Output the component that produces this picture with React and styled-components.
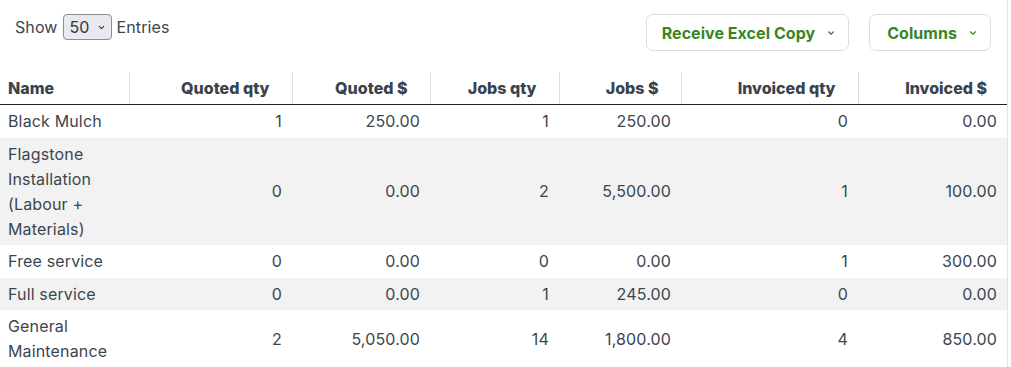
import React from 'react'
import styled, { createGlobalStyle } from 'styled-components'

const GlobalStyle = createGlobalStyle`
  body {
    margin: 0;
    background: #fff;
    font-family: Inter, "Noto Sans", sans-serif;
    color: #3c4550;
  }
`

const Page = styled.div`
  width: 1008px;
  border-right: 1px solid #e3e3e3;
  min-height: 367px;
  box-sizing: border-box;
`

const Toolbar = styled.div`
  display: flex;
  justify-content: space-between;
  align-items: flex-start;
  padding: 14px 16px 0 15px;
  height: 58px;
`

const LengthControl = styled.label`
  display: flex;
  align-items: center;
  gap: 5px;
  font-size: 16px;
  letter-spacing: 0.1px;
  line-height: 26px;
`

const FakeSelect = styled.div`
  display: flex;
  align-items: center;
  gap: 7px;
  height: 26px;
  box-sizing: border-box;
  padding: 0 5px 0 6px;
  background: #e9e9ef;
  border: 1px solid #8d8d9b;
  border-radius: 4px;
  font-size: 16px;
  color: #2f3640;
`

const Actions = styled.div`
  display: flex;
  gap: 20px;
`

const ActionButton = styled.button`
  display: flex;
  align-items: center;
  gap: 11px;
  height: 37px;
  box-sizing: border-box;
  padding: 0 12px 0 ${p => p.$padLeft || 15}px;
  background: #fff;
  border: 1px solid #dcdcdc;
  border-radius: 7px;
  font-family: Inter, "Noto Sans", sans-serif;
  font-size: 16px;
  font-weight: 700;
  letter-spacing: 0.05px;
  color: #38861f;
  cursor: pointer;
`

const Table = styled.table`
  width: 1007px;
  border-collapse: collapse;
  table-layout: fixed;
  font-size: 16px;
`

const HeadCell = styled.th`
  height: 32px;
  padding: 0 ${p => (p.$left ? 10 : 22)}px 0 8px;
  font-weight: 800;
  color: #3a434c;
  text-align: ${p => (p.$left ? 'left' : 'right')};
  border-left: ${p => (p.$left ? 'none' : '1px solid #dedede')};
  border-bottom: 1.5px solid #1e2227;

  &:last-child {
    padding-right: 20px;
  }
`

const Row = styled.tr`
  background: ${p => (p.$striped ? '#f2f2f2' : '#fff')};
`

const Cell = styled.td`
  padding: 4px 10px 3.5px 8px;
  line-height: 25px;
  letter-spacing: 0.15px;
  vertical-align: middle;
  text-align: ${p => (p.$left ? 'left' : 'right')};
  color: #3c4550;
`

const Chevron = ({ size = 10 }) => (
  <svg width={size} height={size} viewBox="0 0 10 10" fill="none">
    <path d="M2.5 3.8 L5 6.2 L7.5 3.8" stroke="currentColor" strokeWidth="1.2" strokeLinecap="round" strokeLinejoin="round" />
  </svg>
)

const columns = [
  { label: 'Name', width: 129, left: true },
  { label: 'Quoted qty', width: 163 },
  { label: 'Quoted $', width: 138 },
  { label: 'Jobs qty', width: 129 },
  { label: 'Jobs $', width: 122 },
  { label: 'Invoiced qty', width: 177 },
  { label: 'Invoiced $', width: 149 },
]

const rows = [
  ['Black Mulch', '1', '250.00', '1', '250.00', '0', '0.00'],
  ['Flagstone Installation (Labour + Materials)', '0', '0.00', '2', '5,500.00', '1', '100.00'],
  ['Free service', '0', '0.00', '0', '0.00', '1', '300.00'],
  ['Full service', '0', '0.00', '1', '245.00', '0', '0.00'],
  ['General Maintenance', '2', '5,050.00', '14', '1,800.00', '4', '850.00'],
]

export default function App() {
  return (
    <Page>
      <GlobalStyle />
      <Toolbar>
        <LengthControl>
          Show
          <FakeSelect>
            50
            <Chevron size={9} />
          </FakeSelect>
          Entries
        </LengthControl>
        <Actions>
          <ActionButton>
            Receive Excel Copy
            <Chevron />
          </ActionButton>
          <ActionButton $padLeft={17}>
            Columns
            <Chevron />
          </ActionButton>
        </Actions>
      </Toolbar>
      <Table>
        <colgroup>
          {columns.map(c => (
            <col key={c.label} style={{ width: c.width }} />
          ))}
        </colgroup>
        <thead>
          <tr>
            {columns.map(c => (
              <HeadCell key={c.label} $left={c.left}>
                {c.label}
              </HeadCell>
            ))}
          </tr>
        </thead>
        <tbody>
          {rows.map((r, i) => (
            <Row key={r[0]} $striped={i % 2 === 1}>
              {r.map((v, j) => (
                <Cell key={j} $left={j === 0}>
                  {v}
                </Cell>
              ))}
            </Row>
          ))}
        </tbody>
      </Table>
    </Page>
  )
}
